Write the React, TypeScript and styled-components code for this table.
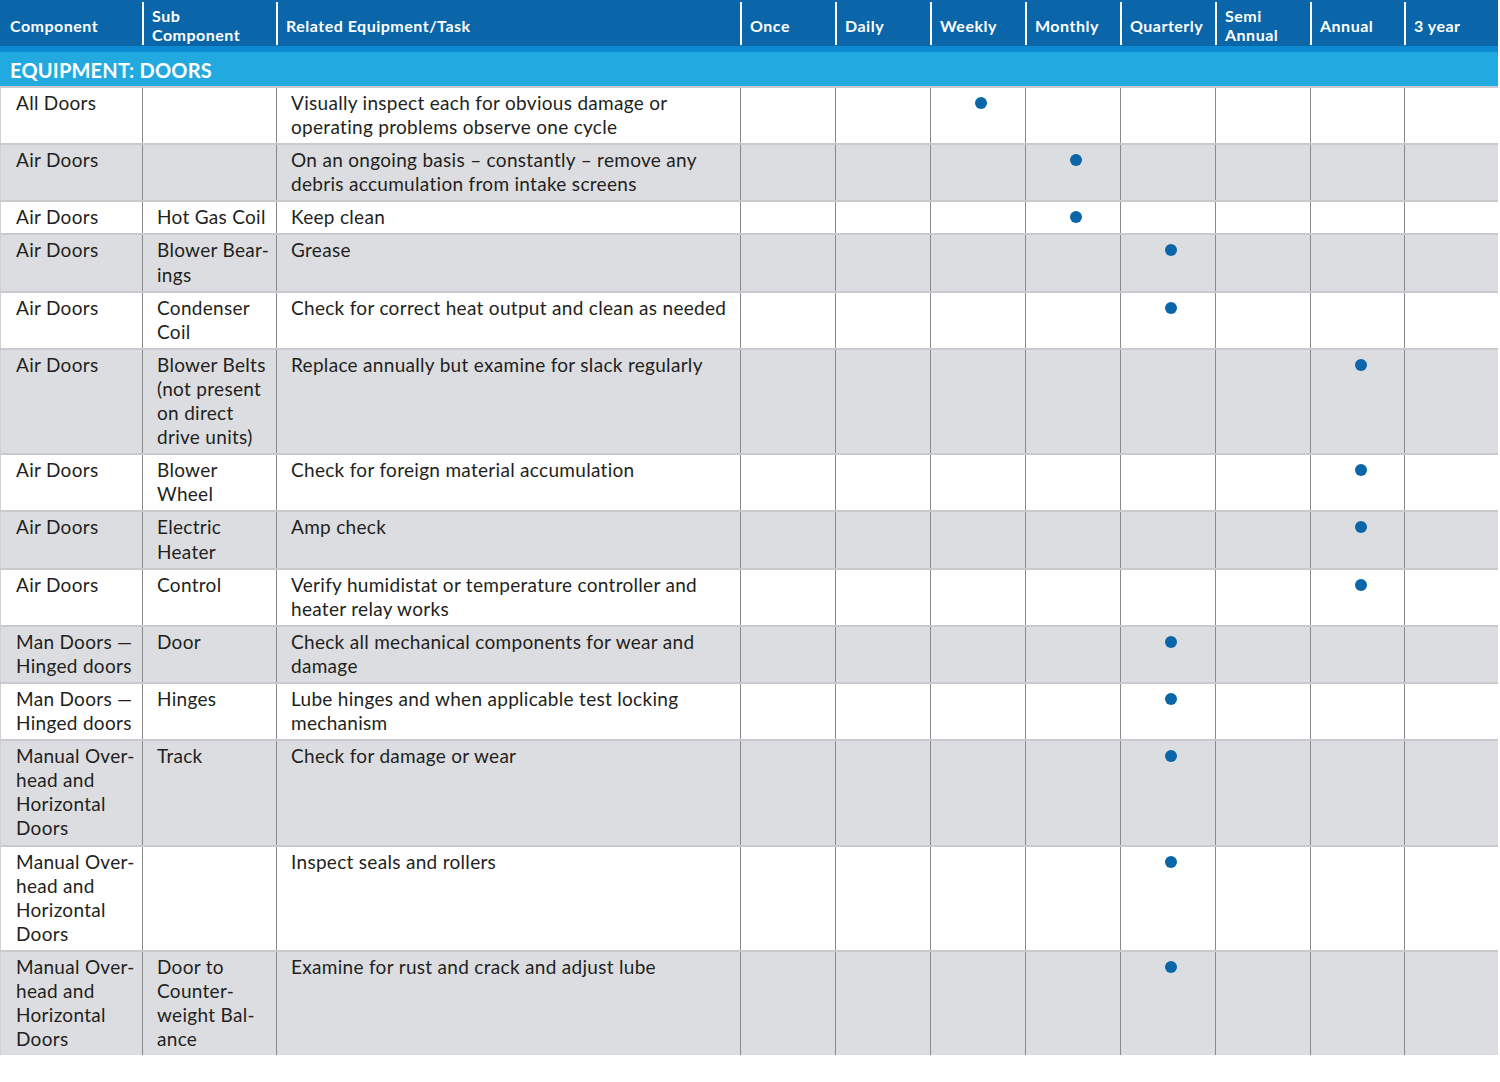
import React from "react";
import styled, { createGlobalStyle } from "styled-components";

const Global = createGlobalStyle`
  html, body { margin: 0; padding: 0; background: #ffffff; }
  body { font-family: Lato, "Open Sans", sans-serif; }
`;

const COLS = "142px 134px 464px 95px 95px 95px 95px 95px 95px 94px 94px";

const Table = styled.div`
  width: 1498px;
  display: flex;
  flex-direction: column;
`;

const HeaderRow = styled.div`
  display: grid;
  grid-template-columns: ${COLS};
  height: 46px;
  background: #0a66a8;
  border-bottom: 6px solid #0b89d1;
`;

const HeadCell = styled.div<{ $first?: boolean }>`
  display: flex;
  align-items: center;
  padding: 3px 0 0 ${(p) => (p.$first ? "10px" : "8px")};
  border-left: ${(p) => (p.$first ? "none" : "2px solid #ffffff")};
  margin: 2px 0 1px;
  color: #ffffff;
  font-family: Lato, sans-serif;
  font-weight: 700;
  font-size: 16px;
  letter-spacing: 0.5px;
  line-height: 19px;
  white-space: nowrap;
`;

const Band = styled.div`
  height: 33px;
  background: #22a9e0;
  display: flex;
  align-items: center;
  padding: 1px 0 0 10px;
  color: #ffffff;
  font-family: Lato, sans-serif;
  font-weight: 700;
  font-size: 20px;
  letter-spacing: 0.2px;
`;

const Row = styled.div<{ $shade: boolean }>`
  display: grid;
  grid-template-columns: ${COLS};
  background: ${(p) => (p.$shade ? "#dcdde0" : "#ffffff")};
  border-top: 2px solid #c9cacd;
`;

const Cell = styled.div<{ $first?: boolean }>`
  padding: 3px 4px 4px ${(p) => (p.$first ? "15px" : "14px")};
  border-left: ${(p) => (p.$first ? "1px solid #d0d0d0" : "1px solid #8a8a8a")};
  color: #231f20;
  font-family: Lato, sans-serif;
  font-size: 19px;
  letter-spacing: 0.3px;
  line-height: 24.1px;
  white-space: nowrap;
`;

const Line = styled.div``;

const FreqCell = styled.div`
  border-left: 1px solid #8a8a8a;
  display: flex;
  justify-content: center;
  align-items: flex-start;
  padding-top: 9px;
`;

const Dot = styled.span`
  display: block;
  width: 12px;
  height: 12px;
  margin-left: 6px;
  border-radius: 50%;
  background: #0a66a8;
`;

const heads: string[][] = [
  ["Component"],
  ["Sub", "Component"],
  ["Related Equipment/Task"],
  ["Once"],
  ["Daily"],
  ["Weekly"],
  ["Monthly"],
  ["Quarterly"],
  ["Semi", "Annual"],
  ["Annual"],
  ["3 year"],
];

type Freq = 0 | 1 | 2 | 3 | 4 | 5 | 6 | 7;
// 0 once, 1 daily, 2 weekly, 3 monthly, 4 quarterly, 5 semi, 6 annual, 7 3yr

interface RowData {
  comp: string[];
  sub: string[];
  task: string[];
  freq: Freq;
}

const MOHD = ["Manual Over-", "head and", "Horizontal", "Doors"];
const MAN = ["Man Doors \u2014", "Hinged doors"];

const rows: RowData[] = [
  { comp: ["All Doors"], sub: [], task: ["Visually inspect each for obvious damage or", "operating problems observe one cycle"], freq: 2 },
  { comp: ["Air Doors"], sub: [], task: ["On an ongoing basis \u2013 constantly \u2013 remove any", "debris accumulation from intake screens"], freq: 3 },
  { comp: ["Air Doors"], sub: ["Hot Gas Coil"], task: ["Keep clean"], freq: 3 },
  { comp: ["Air Doors"], sub: ["Blower Bear-", "ings"], task: ["Grease"], freq: 4 },
  { comp: ["Air Doors"], sub: ["Condenser", "Coil"], task: ["Check for correct heat output and clean as needed"], freq: 4 },
  { comp: ["Air Doors"], sub: ["Blower Belts", "(not present", "on direct", "drive units)"], task: ["Replace annually but examine for slack regularly"], freq: 6 },
  { comp: ["Air Doors"], sub: ["Blower", "Wheel"], task: ["Check for foreign material accumulation"], freq: 6 },
  { comp: ["Air Doors"], sub: ["Electric", "Heater"], task: ["Amp check"], freq: 6 },
  { comp: ["Air Doors"], sub: ["Control"], task: ["Verify humidistat or temperature controller and", "heater relay works"], freq: 6 },
  { comp: MAN, sub: ["Door"], task: ["Check all mechanical components for wear and", "damage"], freq: 4 },
  { comp: MAN, sub: ["Hinges"], task: ["Lube hinges and when applicable test locking", "mechanism"], freq: 4 },
  { comp: MOHD, sub: ["Track"], task: ["Check for damage or wear"], freq: 4 },
  { comp: MOHD, sub: [], task: ["Inspect seals and rollers"], freq: 4 },
  { comp: MOHD, sub: ["Door to", "Counter-", "weight Bal-", "ance"], task: ["Examine for rust and crack and adjust lube"], freq: 4 },
];

const Lines = ({ lines }: { lines: string[] }) => (
  <>
    {lines.map((l, i) => (
      <Line key={i}>{l}</Line>
    ))}
  </>
);

export default function App() {
  return (
    <>
      <Global />
      <Table>
        <HeaderRow>
          {heads.map((h, i) => (
            <HeadCell key={i} $first={i === 0}>
              <div>
                <Lines lines={h} />
              </div>
            </HeadCell>
          ))}
        </HeaderRow>
        <Band>EQUIPMENT: DOORS</Band>
        {rows.map((r, i) => (
          <Row key={i} $shade={i % 2 === 1}>
            <Cell $first>
              <Lines lines={r.comp} />
            </Cell>
            <Cell>
              <Lines lines={r.sub} />
            </Cell>
            <Cell>
              <Lines lines={r.task} />
            </Cell>
            {Array.from({ length: 8 }).map((_, f) => (
              <FreqCell key={f}>{r.freq === f ? <Dot /> : null}</FreqCell>
            ))}
          </Row>
        ))}
      </Table>
    </>
  );
}
